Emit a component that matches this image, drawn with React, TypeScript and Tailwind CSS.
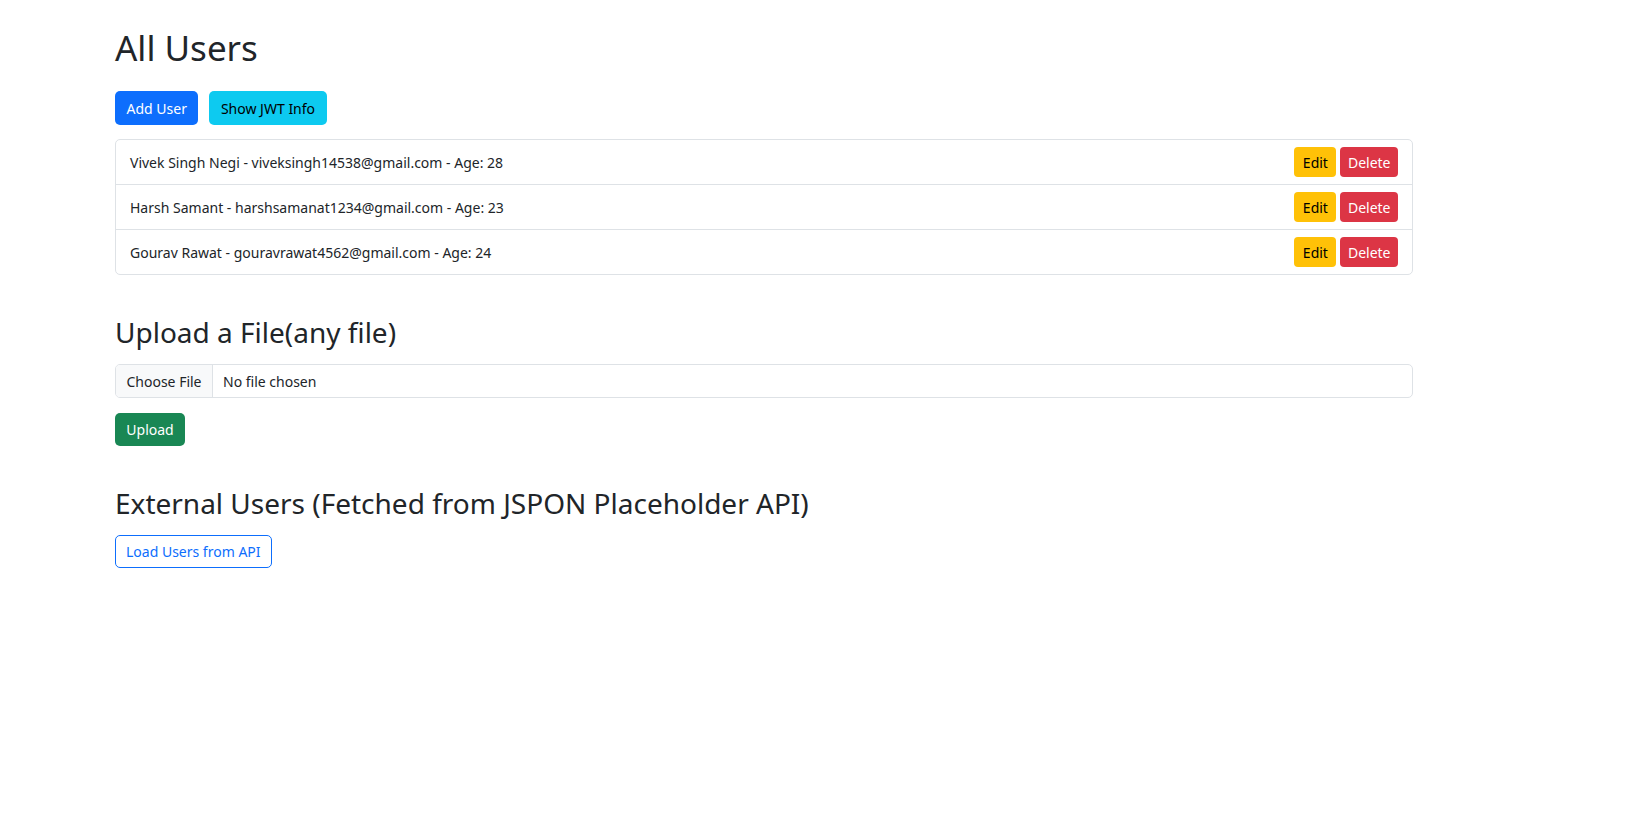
import React from 'react';

// Bootstrap-like user admin page, rendered at ~90% zoom scale.

type User = { name: string; email: string; age: number };

const users: User[] = [
  { name: 'Vivek Singh Negi', email: 'viveksingh14538@gmail.com', age: 28 },
  { name: 'Harsh Samant', email: 'harshsamanat1234@gmail.com', age: 23 },
  { name: 'Gourav Rawat', email: 'gouravrawat4562@gmail.com', age: 24 },
];

function UserRow({ user, last }: { user: User; last: boolean }) {
  return (
    <li
      className={`flex items-center justify-between px-[14px] ${
        last ? 'h-[44px]' : 'h-[45px] border-b border-[#dee2e6]'
      }`}
    >
      <span>
        {user.name} - {user.email} - Age: {user.age}
      </span>
      <div className="flex gap-[4px]">
        <button
          type="button"
          className="h-[30px] rounded-[4px] bg-[#ffc107] px-[8.5px] leading-[21px] text-black"
        >
          Edit
        </button>
        <button
          type="button"
          className="h-[30px] rounded-[4px] bg-[#dc3545] px-[7.5px] leading-[21px] text-white"
        >
          Delete
        </button>
      </div>
    </li>
  );
}

export default function App() {
  return (
    <div className="min-h-screen bg-white pl-[115px] pt-[27px] font-['Noto_Sans',sans-serif] text-[14px] leading-[21px] text-[#212529]">
      <div className="w-[1298px]">
        <h1 className="text-[35px] font-normal leading-[42px]">All Users</h1>

        <div className="mt-[22px] flex gap-[11px]">
          <button
            type="button"
            className="h-[34px] rounded-[5px] bg-[#0d6efd] px-[11.5px] text-white"
          >
            Add User
          </button>
          <button
            type="button"
            className="h-[34px] rounded-[5px] bg-[#0dcaf0] px-[11.5px] text-black"
          >
            Show JWT Info
          </button>
        </div>

        <ul className="mt-[14px] rounded-[5px] border border-[#dee2e6]">
          {users.map((u, i) => (
            <UserRow key={u.email} user={u} last={i === users.length - 1} />
          ))}
        </ul>

        <h2 className="mt-[40px] text-[28px] font-normal leading-[34px]">
          Upload a File(any file)
        </h2>

        <div className="mt-[15px] flex h-[34px] items-stretch overflow-hidden rounded-[5px] border border-[#dee2e6]">
          <span className="flex w-[97px] items-center justify-center border-r border-[#dee2e6] bg-[#f8f9fa]">
            Choose File
          </span>
          <span className="flex items-center pl-[10px]">No file chosen</span>
        </div>

        <button
          type="button"
          className="mt-[15px] h-[33px] w-[70px] rounded-[5px] bg-[#198754] text-white"
        >
          Upload
        </button>

        <h3 className="mt-[40px] text-[28px] font-normal leading-[34px]">
          External Users (Fetched from JSPON Placeholder API)
        </h3>

        <button
          type="button"
          className="mt-[15px] h-[33px] rounded-[5px] border border-[#0d6efd] px-[10px] text-[#0d6efd]"
        >
          Load Users from API
        </button>
      </div>
    </div>
  );
}
